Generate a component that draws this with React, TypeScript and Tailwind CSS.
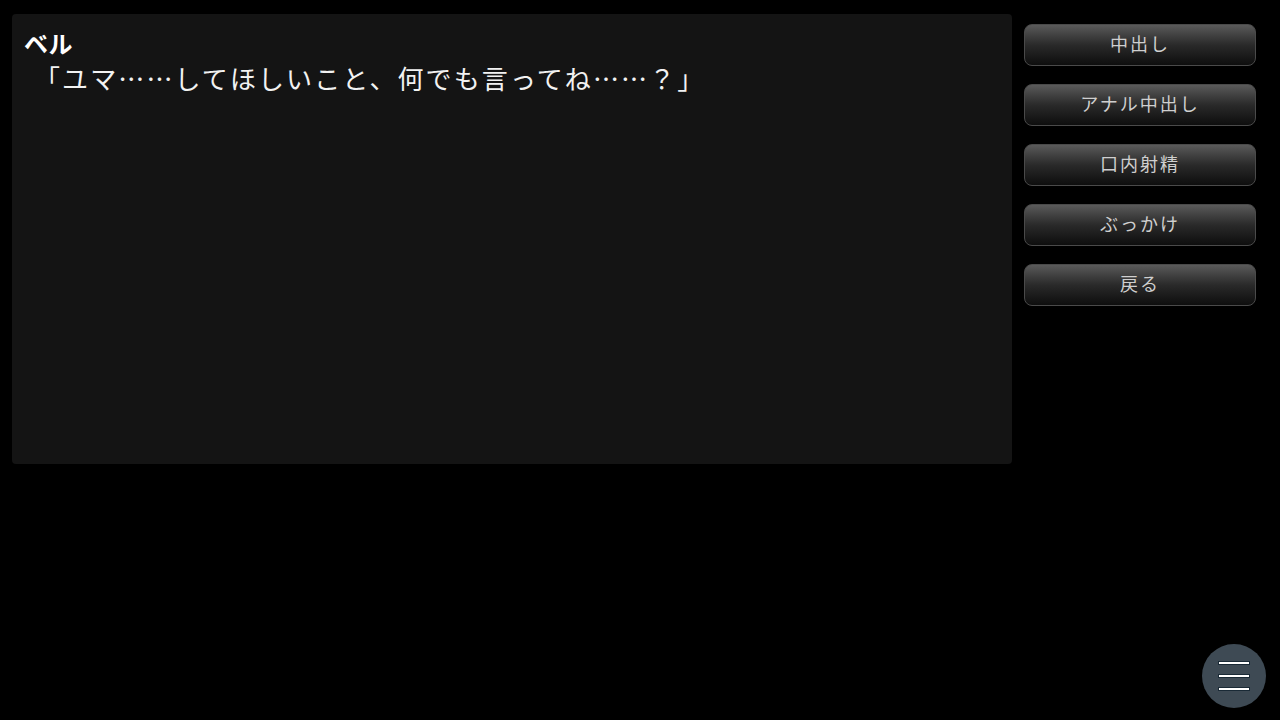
import React from "react";

const buttons = ["中出し", "アナル中出し", "口内射精", "ぶっかけ", "戻る"];

export default function App() {
  return (
    <div
      className="w-[1280px] h-[720px] bg-black relative overflow-hidden"
      style={{ fontFamily: '"Noto Sans CJK JP", "Noto Sans", sans-serif' }}
    >
      <div className="flex items-start pt-[14px] pl-[12px] gap-[12px]">
        <div className="w-[1000px] h-[450px] bg-[#141414] rounded-[4px] pl-[12px] pt-[12px]">
          <div className="text-white font-bold text-[24px] leading-[34px] tracking-[0.5px]">ベル</div>
          <div className="text-[#f2f2f2] text-[26px] leading-[36px] tracking-[2.1px] pl-[10px]">
            「ユマ……してほしいこと、何でも言ってね……？」
          </div>
        </div>
        <div className="flex flex-col gap-[18px] pt-[10px]">
          {buttons.map((b) => (
            <div
              key={b}
              className="w-[232px] h-[42px] rounded-[8px] border border-[#4a4a4a] bg-gradient-to-b from-[#5a5a5a] via-[#2a2a2a] to-[#0e0e0e] flex items-center justify-center pb-[3px] text-[#cfcfcf] text-[18px] tracking-[2px]"
            >
              {b}
            </div>
          ))}
        </div>
      </div>
      <div className="absolute left-[1202px] top-[644px] w-[64px] h-[64px] rounded-full bg-[#3e4a54] flex flex-col items-center justify-center gap-[9px]">
        <div className="w-[32px] h-[4px] bg-white border border-[#1a2a36]" />
        <div className="w-[32px] h-[4px] bg-white border border-[#1a2a36]" />
        <div className="w-[32px] h-[4px] bg-white border border-[#1a2a36]" />
      </div>
    </div>
  );
}
